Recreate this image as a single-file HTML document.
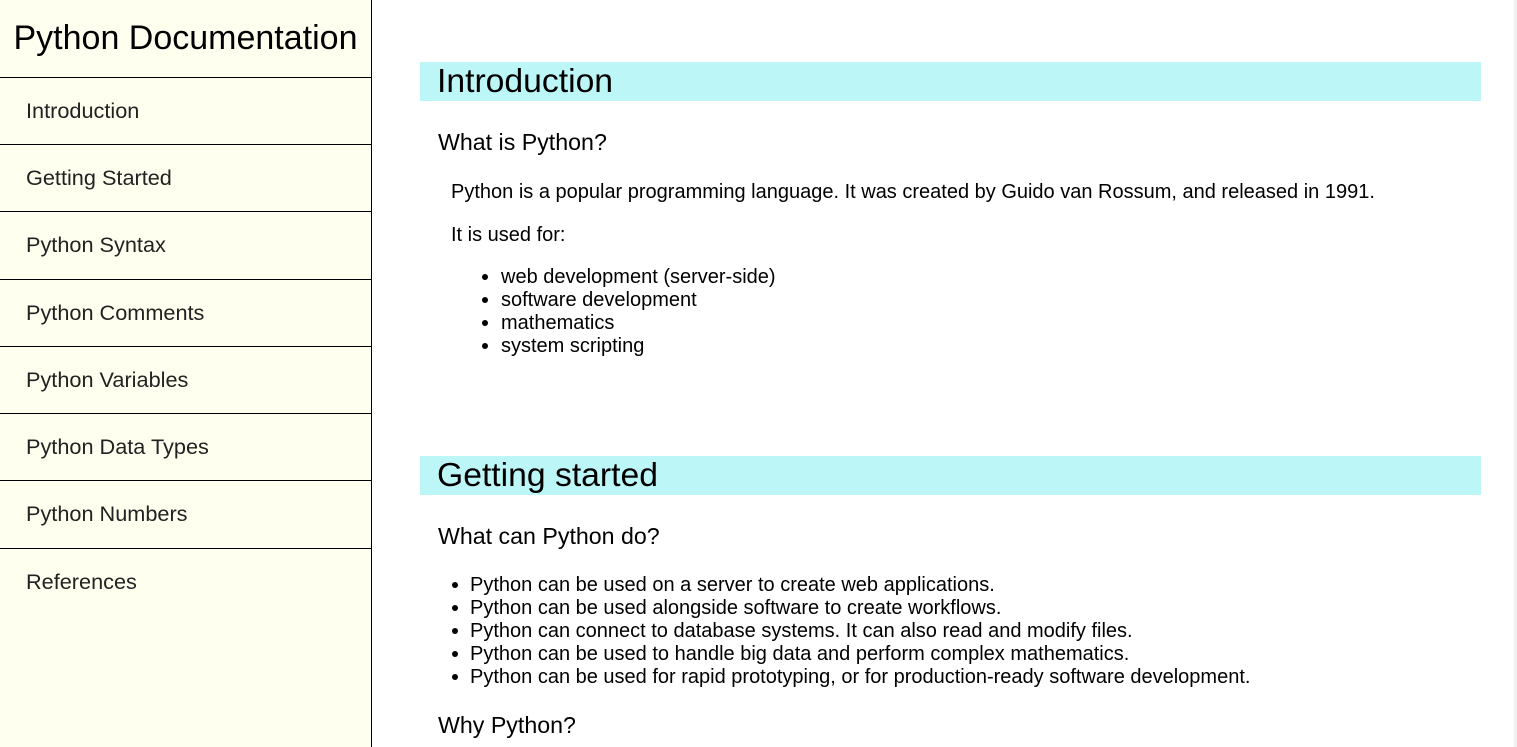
<!DOCTYPE html>
<html><head><meta charset="utf-8"><style>
*{margin:0;padding:0;box-sizing:border-box}
body{width:1517px;height:747px;overflow:hidden;background:#fff;font-family:"Liberation Sans",Arial,sans-serif;color:#000;position:relative}
#nav{position:absolute;left:0;top:0;width:372px;height:747px;background:#fffff0;border-right:1px solid #000}
#nav .hd{position:absolute;left:0;top:0;width:371px;height:78px;border-bottom:1px solid #000;font-size:34px;line-height:76px;text-align:center}
#nav .it{position:absolute;left:0;width:371px;height:68px;border-bottom:1px solid #000;font-size:21.7px;line-height:68px;padding-left:26px;color:#222}
.t{position:absolute;white-space:nowrap}
.band{position:absolute;left:420px;width:1061px;height:39px;background:#bdf6f7;font-size:33.7px;line-height:39px;padding-left:17px}
.h3{font-size:23.2px;line-height:26px}
.p{font-size:20px;line-height:23px}
.b{position:absolute;width:6px;height:6px;border-radius:50%;background:#000}
#sb{position:absolute;left:1514px;top:0;width:3px;height:747px;background:#f1f1f1}
</style></head><body>
<div id="nav">
<div class="hd">Python Documentation</div>
<div class="it" style="top:77px">Introduction</div>
<div class="it" style="top:144px">Getting Started</div>
<div class="it" style="top:211px;height:69px">Python Syntax</div>
<div class="it" style="top:279px">Python Comments</div>
<div class="it" style="top:346px">Python Variables</div>
<div class="it" style="top:413px">Python Data Types</div>
<div class="it" style="top:480px;height:69px">Python Numbers</div>
<div class="it" style="top:548px;border-bottom:none">References</div>
</div>
<div class="band" style="top:62px">Introduction</div>
<div class="t h3" style="left:438px;top:129px">What is Python?</div>
<div class="t p" style="left:451px;top:181px">Python is a popular programming language. It was created by Guido van Rossum, and released in 1991.</div>
<div class="t p" style="left:451px;top:224px">It is used for:</div>
<div class="b" style="left:482px;top:274px"></div><div class="t p" style="left:501px;top:266px">web development (server-side)</div>
<div class="b" style="left:482px;top:297px"></div><div class="t p" style="left:501px;top:289px">software development</div>
<div class="b" style="left:482px;top:320px"></div><div class="t p" style="left:501px;top:312px">mathematics</div>
<div class="b" style="left:482px;top:343px"></div><div class="t p" style="left:501px;top:335px">system scripting</div>
<div class="band" style="top:456px">Getting started</div>
<div class="t h3" style="left:438px;top:523px">What can Python do?</div>
<div class="b" style="left:452px;top:582px"></div><div class="t p" style="left:470px;top:574px">Python can be used on a server to create web applications.</div>
<div class="b" style="left:452px;top:605px"></div><div class="t p" style="left:470px;top:597px">Python can be used alongside software to create workflows.</div>
<div class="b" style="left:452px;top:628px"></div><div class="t p" style="left:470px;top:620px">Python can connect to database systems. It can also read and modify files.</div>
<div class="b" style="left:452px;top:651px"></div><div class="t p" style="left:470px;top:643px">Python can be used to handle big data and perform complex mathematics.</div>
<div class="b" style="left:452px;top:674px"></div><div class="t p" style="left:470px;top:666px">Python can be used for rapid prototyping, or for production-ready software development.</div>
<div class="t h3" style="left:438px;top:712px">Why Python?</div>
<div id="sb"></div>
</body></html>
